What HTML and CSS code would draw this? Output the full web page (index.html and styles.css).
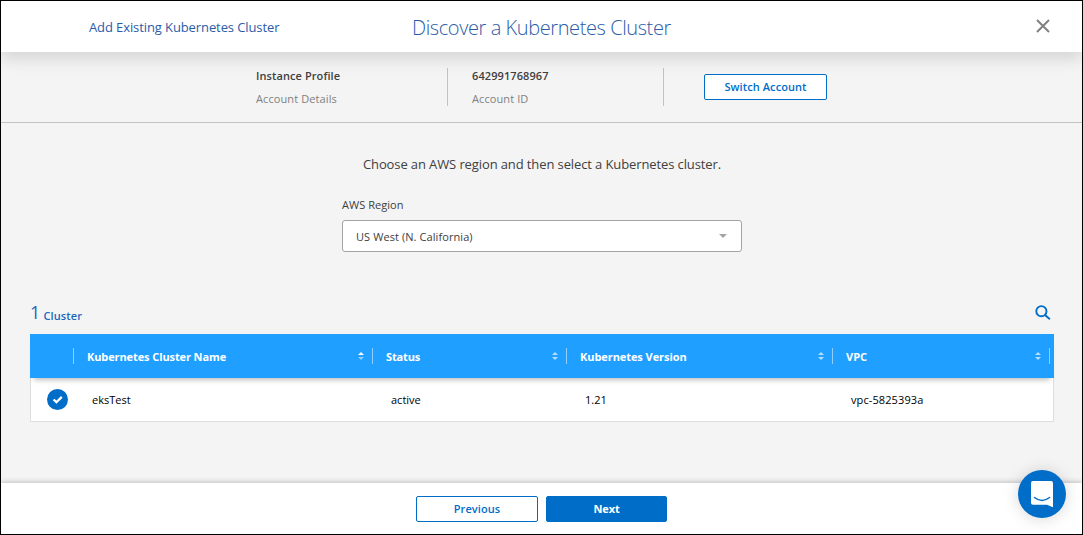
FILE: index.html
```html
<!DOCTYPE html>
<html lang="en">
<head>
<meta charset="utf-8">
<title>Discover a Kubernetes Cluster</title>
<link rel="stylesheet" href="styles.css">
</head>
<body>
<div class="wizard">
  <header class="header">
    <span class="breadcrumb">Add Existing Kubernetes Cluster</span>
    <h1 class="title">Discover a Kubernetes Cluster</h1>
    <svg class="close" width="14" height="14" viewBox="0 0 14 14"><path d="M1 1L13 13M13 1L1 13" fill="none" stroke="#808080" stroke-width="2"/></svg>
  </header>
  <section class="account">
    <div class="account-item profile"><strong class="account-value">Instance Profile</strong><span class="account-label">Account Details</span></div>
    <div class="account-item account-id"><strong class="account-value">642991768967</strong><span class="account-label">Account ID</span></div>
    <button class="button switch"><span>Switch Account</span></button>
  </section>
  <main class="content">
    <p class="intro">Choose an AWS region and then select a Kubernetes cluster.</p>
    <div class="field">
      <label class="field-label">AWS Region</label>
      <div class="select"><span>US West (N. California)</span><svg width="8" height="4" viewBox="0 0 8 4"><path d="M0 0H8L4 4Z" fill="#a3a3a3"/></svg></div>
    </div>
    <div class="summary">
      <span class="count">1</span><span class="count-label">Cluster</span>
      <svg class="search" width="16" height="16" viewBox="0 0 16 16"><g fill="none" stroke="#006dc9" stroke-width="1.9"><circle cx="6.4" cy="6.2" r="5.1"/><path d="M10 10L14.900 14.300"/></g></svg>
    </div>
    <div class="table">
      <div class="row head">
        <div class="th"></div>
        <div class="th"><span class="name">Kubernetes Cluster Name</span><svg class="sort asc" width="6" height="8" viewBox="0 0 6 8"><path d="M0 3L3 0L6 3Z"/><path class="down" d="M0 5H6L3 8Z"/></svg></div>
        <div class="th"><span class="state">Status</span><svg class="sort" width="6" height="8" viewBox="0 0 6 8"><path d="M0 3L3 0L6 3Z"/><path d="M0 5H6L3 8Z"/></svg></div>
        <div class="th"><span class="version">Kubernetes Version</span><svg class="sort" width="6" height="8" viewBox="0 0 6 8"><path d="M0 3L3 0L6 3Z"/><path d="M0 5H6L3 8Z"/></svg></div>
        <div class="th"><span>VPC</span><svg class="sort" width="6" height="8" viewBox="0 0 6 8"><path d="M0 3L3 0L6 3Z"/><path d="M0 5H6L3 8Z"/></svg></div>
      </div>
      <div class="row body">
        <div class="check"><svg width="21" height="21" viewBox="0 0 21 21"><circle cx="10.5" cy="10.500" r="10.500" fill="#006dc9"/><path d="M6.600 10.500L9.400 13.200L14.800 7.900" fill="none" stroke="#fff" stroke-width="2.300"/></svg></div>
        <div class="td">eksTest</div>
        <div class="td">active</div>
        <div class="td">1.21</div>
        <div class="td vpc">vpc-5825393a</div>
      </div>
    </div>
  </main>
  <footer class="footer">
    <button class="button"><span>Previous</span></button>
    <button class="button primary"><span>Next</span></button>
  </footer>
  <div class="chat"><svg width="48" height="48" viewBox="0 0 48 48"><path d="M15 11H33Q35 11 35 13V37.200L29 34.700H15Q13 34.700 13 32.700V13Q13 11 15 11Z" fill="#fff"/><path d="M16.500 27.500Q24 33.500 31.500 27.500" fill="none" stroke="#006dc9" stroke-width="1.500" stroke-linecap="round"/></svg></div>
</div>
</body>
</html>
```
FILE: styles.css
```css
* { box-sizing: border-box; }
body { margin: 0; font-family: "Open Sans", "Noto Sans", sans-serif; font-size: 11px; color: #404040; }
svg { display: block; }
.wizard { position: relative; display: flex; flex-direction: column; width: 1083px; height: 535px; border: 1px solid #000; background: #f4f4f4; overflow: hidden; }
.header { display: grid; grid-template-columns: 411px 1fr 14px; align-items: center; height: 51px; flex: none; padding-right: 32px; background: #fff; color: #2b5ca8; box-shadow: 0 6px 16px rgba(0, 0, 0, .14); z-index: 1; }
.breadcrumb { padding-left: 88px; font-size: 13px; letter-spacing: -.1px; }
.title { margin: 0; font-size: 20px; font-weight: 300; line-height: 28px; padding-top: 2px; letter-spacing: -.41px; }
.close { margin-top: -1px; }
.account { display: flex; height: 71px; flex: none; padding: 16px 0 0 255px; border-bottom: 1px solid #c2c2c2; }
.account-item { height: 38px; border-right: 1px solid #c2c2c2; display: flex; flex-direction: column; }
.profile { width: 192px; }
.account-id { width: 216px; padding-left: 24px; }
.account-value { font-weight: 600; line-height: 16px; letter-spacing: .09px; }
.account-label { color: #808080; line-height: 16px; margin-top: 7px; letter-spacing: .1px; }
.button { width: 122px; height: 26px; padding: 0; border: 1px solid #006dc9; border-radius: 2px; background: #fff; color: #006dc9; font: 600 11px/16px "Open Sans", sans-serif; letter-spacing: .08px; }
.switch { width: 123px; margin: 6px 0 0 40px; }
.primary { width: 121px; background: #006dc9; color: #fff; font-weight: 700; letter-spacing: -.1px; }
.content { padding: 0 28px 0 29px; flex: 1; }
.intro { margin: 32px 0 0; text-align: center; font-size: 13px; line-height: 18px; letter-spacing: -.11px; }
.field { width: 400px; margin: 24px 0 0 312px; }
.field-label { display: block; line-height: 16px; letter-spacing: .05px; }
.select { display: flex; align-items: center; justify-content: space-between; height: 32px; margin-top: 7px; padding: 0 14px 0 13px; background: #fff; border: 1px solid #a3a3a3; border-radius: 3px; letter-spacing: .08px; }
.select svg { margin-top: -1px; }
.summary { display: flex; align-items: baseline; height: 36px; margin-top: 46px; color: #1e65bd; }
.count { font-size: 18px; width: 13.5px; font-weight: 400; line-height: 30px; margin-top: -1px; }
.count-label { font-weight: 600; letter-spacing: .1px; padding-top: 1px; position: relative; top: 1px; }
.search { margin: 7px 3px 0 auto; align-self: flex-start; }
.row { display: grid; grid-template-columns: 44px 299px 194px 266px 1fr; align-items: center; }
.head { position: relative; height: 44px; background: #1f9fff; color: #fff; grid-template-columns: 44px 299px 194px 266px 217px; box-shadow: 0 6px 5px -4px rgba(0, 0, 0, .25); }
.th { display: flex; align-items: center; justify-content: space-between; height: 16px; padding: 0 8px 0 13px; border-right: 1px solid rgba(255, 255, 255, .5); font-weight: 700; }
.name { letter-spacing: -.1px; }
.state { letter-spacing: -.15px; }
.version { letter-spacing: -.07px; }
.sort { fill: #b5deff; }
.asc { fill: #fff; }
.asc .down { fill: #8dccff; }
.body { height: 44px; border: 1px solid #dedede; border-top: 0; background: #fff; color: #000; }
.td { padding-left: 17px; }
.vpc { letter-spacing: .1px; }
.check { padding-left: 16px; }
.footer { display: flex; justify-content: center; gap: 8px; height: 51px; flex: none; padding-top: 13px; background: #fff; box-shadow: 0 -1px 5px rgba(0, 0, 0, .22); }
.chat { position: absolute; left: 1017px; top: 469px; width: 48px; height: 48px; border-radius: 50%; background: #006dc9; box-shadow: 0 1px 16px rgba(0, 0, 0, .16); z-index: 2; }
```
